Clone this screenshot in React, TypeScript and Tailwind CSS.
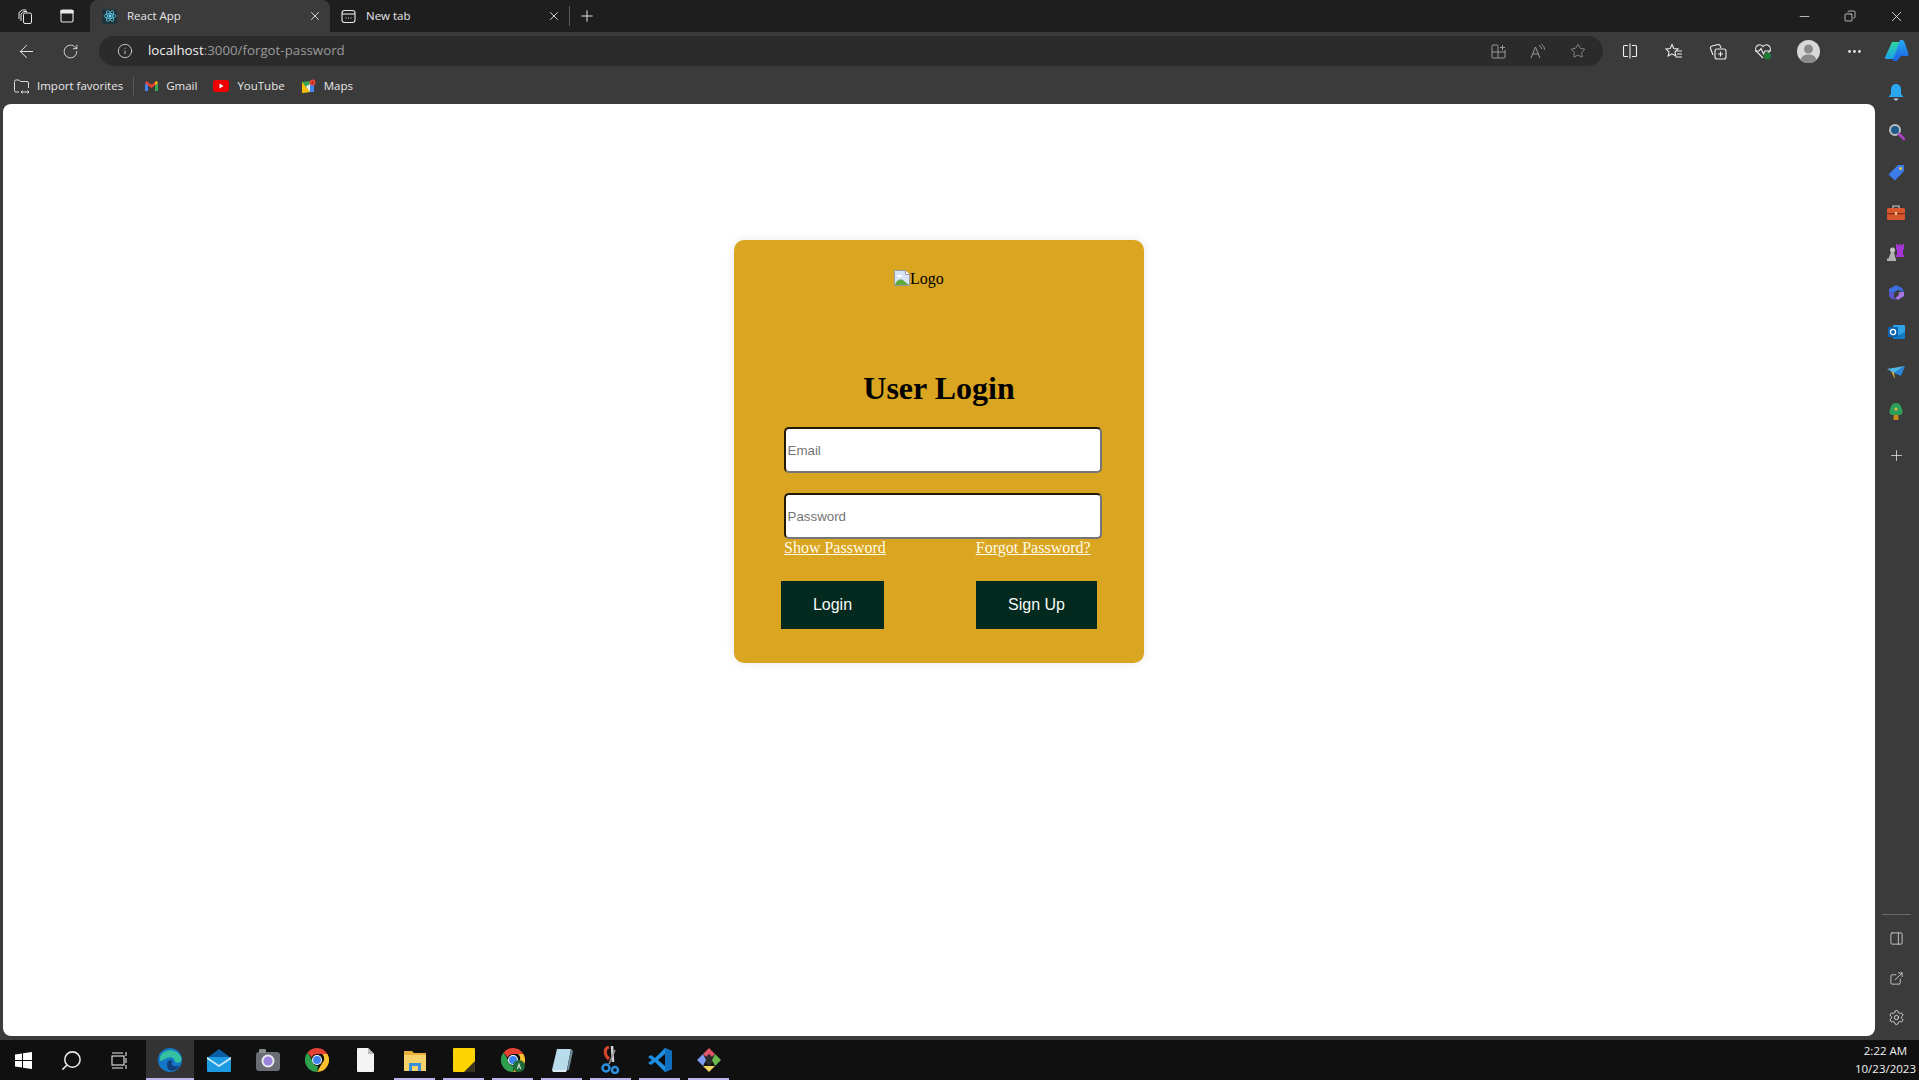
import type { ReactNode } from "react";
import {
  ArrowLeft,
  Copy,
  ExternalLink,
  Info,
  Minus,
  MoreHorizontal,
  PanelRight,
  Plus,
  RotateCw,
  Search,
  Settings,
  Star,
  X,
} from "lucide-react";

function Slot({ width, children }: { width: string; children: ReactNode }) {
  return <div className={`flex shrink-0 items-center justify-center ${width}`}>{children}</div>;
}

function WorkspaceIcon() {
  return (
    <svg width="17" height="17" viewBox="0 0 17 17" fill="none" stroke="#e8e8e8" strokeWidth="1">
      <path d="M2 11V4.5L5.5 2h4" />
      <path d="M4 13V6l3-2.5h3" />
      <rect x="6.5" y="5" width="8" height="10.5" rx="1.5" />
    </svg>
  );
}

function TabsIcon() {
  return (
    <svg width="16" height="16" viewBox="0 0 16 16" fill="none" stroke="#e8e8e8" strokeWidth="1.1">
      <rect x="2" y="2" width="12" height="12" rx="1.5" />
      <path d="M2 2.5h12V5H2z" fill="#e8e8e8" />
    </svg>
  );
}

function ReactFavicon() {
  return (
    <div className="flex h-[15px] w-[15px] items-center justify-center rounded-[2px] bg-[#20333a]">
      <svg width="14" height="14" viewBox="0 0 14 14" fill="none" stroke="#61dafb" strokeWidth="0.7">
        <ellipse cx="7" cy="7" rx="6" ry="2.4" />
        <ellipse cx="7" cy="7" rx="6" ry="2.4" transform="rotate(60 7 7)" />
        <ellipse cx="7" cy="7" rx="6" ry="2.4" transform="rotate(120 7 7)" />
        <circle cx="7" cy="7" r="1.2" fill="#61dafb" />
      </svg>
    </div>
  );
}

function NewTabIcon() {
  return (
    <svg width="15" height="15" viewBox="0 0 15 15" fill="none" stroke="#e8e8e8" strokeWidth="1.1">
      <rect x="1" y="1.5" width="13" height="12" rx="2.5" />
      <path d="M1 5h13" />
      <path d="M4.5 9h1M7 9h1M9.5 9h1" />
    </svg>
  );
}

function ImportIcon() {
  return (
    <svg width="17" height="17" viewBox="0 0 17 17" fill="none" stroke="#dcdcdc" strokeWidth="1">
      <path d="M6 14H3a1.5 1.5 0 0 1-1.5-1.5v-9A1.5 1.5 0 0 1 3 2h3l1.5 1.5H14A1.5 1.5 0 0 1 15.5 5v5" />
      <path d="M8 14h8M9.5 12.5 8 14l1.5 1.5M14.5 12.5 16 14l-1.5 1.5" />
    </svg>
  );
}

function GmailIcon() {
  return (
    <svg width="15" height="12" viewBox="0 0 15 12">
      <path d="M1 3v8h3V5z" fill="#4285f4" />
      <path d="M14 3v8h-3V5z" fill="#34a853" />
      <path d="M1 3 7.5 8 14 3 12.5 1 7.5 4.8 2.5 1z" fill="#ea4335" />
      <path d="M11 5l3-2-1.5-2-1.5 1z" fill="#fbbc04" />
    </svg>
  );
}

function YoutubeIcon() {
  return (
    <svg width="16" height="12" viewBox="0 0 16 12">
      <rect width="16" height="12" rx="3" fill="#f00000" />
      <path d="M6.5 3.5 10.5 6l-4 2.5z" fill="#fff" />
    </svg>
  );
}

function MapsIcon() {
  return (
    <svg width="15" height="15" viewBox="0 0 15 15">
      <path d="M1 3 9 2v11l-8 1z" fill="#34a853" />
      <path d="M1 3l8 10-8 1z" fill="#fbbc04" />
      <path d="M5 7.5 9 5v8z" fill="#e8eaed" />
      <path d="M9 5h4v8H9z" fill="#4285f4" />
      <circle cx="11.5" cy="3.5" r="3" fill="#ea4335" />
      <circle cx="11.5" cy="3.5" r="1" fill="#8d2a20" />
    </svg>
  );
}

function AppsAddIcon() {
  return (
    <svg width="15" height="15" viewBox="0 0 15 15" fill="none" stroke="#9a9a9a" strokeWidth="1">
      <path d="M1 2a1 1 0 0 1 1-1h4a1 1 0 0 1 1 1v12H2a1 1 0 0 1-1-1z" />
      <path d="M1 8h13v5a1 1 0 0 1-1 1H7" />
      <path d="M14 8V6M11.5 1v5M9 3.5h5" />
    </svg>
  );
}

function ReadAloudIcon() {
  return (
    <svg width="16" height="15" viewBox="0 0 16 15" fill="none" stroke="#9a9a9a" strokeWidth="1">
      <path d="M1 14 5.5 3 10 14M2.800 10h5.400" />
      <path d="M9 1.500c1.500.5 2.500 1.800 2.700 3.500M11.500 0.500c1.800 1 3 2.800 3 5" />
    </svg>
  );
}

function SplitIcon() {
  return (
    <svg width="16" height="16" viewBox="0 0 16 16" fill="none" stroke="#ededed" strokeWidth="1.100">
      <path d="M6 2.500H2.500a1 1 0 0 0-1 1v9a1 1 0 0 0 1 1H6" />
      <path d="M10 2.500h3.500a1 1 0 0 1 1 1v9a1 1 0 0 1-1 1H10" />
      <path d="M8 0.500v15" />
    </svg>
  );
}

function FavoritesIcon() {
  return (
    <svg width="18" height="17" viewBox="0 0 18 17" fill="none" stroke="#ededed" strokeWidth="1.100">
      <path d="M7 1.500 8.800 5.500l4.200.5-3 2.900.8 4.100L7 10.800l-3.800 2.200L4 8.900 1 6l4.200-.5z" />
      <path d="M11.500 8h5.500M12 11h5M10.500 14H17" />
    </svg>
  );
}

function CollectionsIcon() {
  return (
    <svg width="18" height="18" viewBox="0 0 18 18" fill="none" stroke="#ededed" strokeWidth="1.1">
      <path d="M4 13 1.500 6.500A2 2 0 0 1 3 4l6-1.500a2 2 0 0 1 2 1L12 6" />
      <rect x="6" y="7" width="11" height="10" rx="2" />
      <path d="M11.500 9.500v5M9 12h5" />
    </svg>
  );
}

function HealthIcon() {
  return (
    <svg width="18" height="18" viewBox="0 0 18 18" fill="none">
      <path d="M9 16 2.500 9.500A4 4 0 0 1 9 4.500a4 4 0 0 1 6.500 5L13 12" stroke="#ededed" strokeWidth="1.1" />
      <path d="M1 9h4l2-2.500L9.500 12l1.500-3h6" stroke="#ededed" strokeWidth="1.1" />
      <circle cx="13.500" cy="14" r="3.500" fill="#1f7a34" />
    </svg>
  );
}

function Avatar() {
  return (
    <svg width="23" height="23" viewBox="0 0 23 23">
      <circle cx="11.500" cy="11.500" r="11.500" fill="#d8d8d8" />
      <circle cx="11.500" cy="9" r="4.500" fill="#8a8a8a" />
      <path d="M3.500 20c1-4 4-5.500 8-5.500s7 1.500 8 5.500a11.500 11.500 0 0 1-16 0z" fill="#8a8a8a" />
    </svg>
  );
}

function CopilotIcon() {
  return (
    <svg width="25" height="24" viewBox="0 0 25 24">
      <defs>
        <linearGradient id="copilotLeft" x1="0" y1="0" x2="0" y2="1">
          <stop offset="0" stopColor="#2fd6a0" />
          <stop offset="1" stopColor="#1aa0e8" />
        </linearGradient>
        <linearGradient id="copilotRight" x1="0" y1="0" x2="0" y2="1">
          <stop offset="0" stopColor="#27a9f5" />
          <stop offset="1" stopColor="#1b5fe0" />
        </linearGradient>
      </defs>
      <path d="M8 3h8l-5 15a3 3 0 0 1-3 2H2a1 1 0 0 1-1-1.500z" fill="url(#copilotLeft)" />
      <path d="M16 1h1.500a3 3 0 0 1 3 2L24.500 15a1.500 1.500 0 0 1-1.500 2h-6L13 22H8.500z" fill="url(#copilotRight)" />
    </svg>
  );
}

function SideIcon({ name }: { name: string }) {
  if (name === "bell")
    return (
      <svg width="16" height="18" viewBox="0 0 16 18">
        <path d="M8 1a5 5 0 0 1 5 5v5l2.500 3H.5L3 11V6a5 5 0 0 1 5-5z" fill="#2aa7ee" />
        <path d="M6 15.500h4a2 2 0 0 1-4 0z" fill="#c8d8e8" />
      </svg>
    );
  if (name === "search")
    return (
      <svg width="17" height="18" viewBox="0 0 17 18" fill="none">
        <circle cx="7" cy="7" r="5" fill="#1d5c8a" stroke="#b8bec4" strokeWidth="2" />
        <path d="M11 11l5 5" stroke="#b23ec9" strokeWidth="2.600" strokeLinecap="round" />
      </svg>
    );
  if (name === "tag")
    return (
      <svg width="17" height="17" viewBox="0 0 17 17">
        <path d="M10 1h6v6l-9 9.500L.5 10.500z" fill="#3d7bea" />
        <circle cx="12.500" cy="4.500" r="1.500" fill="#e8c64a" />
      </svg>
    );
  if (name === "tools")
    return (
      <svg width="18" height="15" viewBox="0 0 18 15">
        <path d="M6 3V1h6v2" fill="none" stroke="#c9c9c9" strokeWidth="1.2" />
        <rect y="3" width="18" height="12" rx="1.500" fill="#d8572c" />
        <rect y="8" width="18" height="1.500" fill="#8f3418" />
        <rect x="8" y="7" width="2" height="3" fill="#f2c4a8" />
      </svg>
    );
  if (name === "chess")
    return (
      <svg width="18" height="18" viewBox="0 0 18 18">
        <path d="M9 1h1.500v1.500H12V1h1.500v1.500H15V1h2v5l-1 1v5h1v2H9v-2h1V7L9 6z" fill="#a334d6" />
        <circle cx="5.500" cy="7" r="2.500" fill="#c4c4c4" />
        <path d="M4 9h3l1.500 6.500H9V18H0v-2.500h1.500z" fill="#b0b0b0" />
      </svg>
    );
  if (name === "m365")
    return (
      <svg width="17" height="17" viewBox="0 0 17 17">
        <path d="M8 1l6 3 2 4-6-2-4 3-5-1V5z" fill="#3b6fe0" />
        <path d="M16 8v4l-6 4-3-2 3-2 1-4z" fill="#a774e0" />
        <path d="M1 8l5 1v5l2 2-4-1-3-3z" fill="#5a55cf" />
        <path d="M6 9l4-3 1 3-1 3-4 1z" fill="#3d3d3d" />
      </svg>
    );
  if (name === "outlook")
    return (
      <svg width="17" height="16" viewBox="0 0 17 16">
        <rect x="5" y="1" width="12" height="14" rx="1" fill="#2fa3e6" />
        <path d="M5 8l6 3 6-3v7H5z" fill="#1378c4" />
        <rect y="3" width="10" height="10" rx="1" fill="#0a62ae" />
        <circle cx="5" cy="8" r="2.600" fill="none" stroke="#fff" strokeWidth="1.3" />
      </svg>
    );
  if (name === "send")
    return (
      <svg width="18" height="13" viewBox="0 0 18 13">
        <path d="M0 3 18 0 7 7z" fill="#4fb6e8" />
        <path d="M18 0 7 7l7 3z" fill="#2a86d8" />
        <path d="M4 5l3 2 1 6z" fill="#e8b93a" />
      </svg>
    );
  return (
    <svg width="14" height="18" viewBox="0 0 14 18">
      <path d="M7 0c3 0 5 2 5.500 5C14 7 14 10 12 12H2C0 10 0 7 1.500 5 2 2 4 0 7 0z" fill="#2e9e5b" />
      <rect x="4.500" y="12" width="5" height="5" rx="1" fill="#c9871e" />
      <circle cx="7" cy="6" r="1.500" fill="#e2b93d" />
    </svg>
  );
}

function TaskbarIcon({ name }: { name: string }) {
  if (name === "edge")
    return (
      <svg width="24" height="24" viewBox="0 0 24 24">
        <circle cx="12" cy="12" r="12" fill="#1478c8" />
        <path d="M2 9C5 1 18-1 23 9c2 5-3 7-6 5 0-4-4-6-8-4-3 1-5 3-7 3z" fill="#35c0a0" />
        <path d="M9 16c0-3 3-5 6-3-2 1-2 4 1 5 3 1 5 0 6-1-2 4-7 7-11 5-1-1-2-3-2-6z" fill="#123e7a" />
      </svg>
    );
  if (name === "mail")
    return (
      <svg width="24" height="24" viewBox="0 0 24 24">
        <path d="M12 1 24 10H0z" fill="#0a5ea8" />
        <rect y="9" width="24" height="15" rx="1" fill="#1e9be0" />
        <path d="M0 9l12 8 12-8v2l-12 8L0 11z" fill="#d4edfb" />
      </svg>
    );
  if (name === "camera")
    return (
      <svg width="24" height="22" viewBox="0 0 24 22">
        <rect y="3" width="24" height="19" rx="3" fill="#6b6e75" />
        <rect x="3" y="0" width="7" height="4" rx="1" fill="#8a8d94" />
        <circle cx="12" cy="12" r="6.500" fill="#e8e8ef" />
        <circle cx="12" cy="12" r="4.500" fill="#9a83dc" />
      </svg>
    );
  if (name === "chrome" || name === "chromeA")
    return (
      <svg width="24" height="24" viewBox="0 0 24 24">
        <path d="M12 0a12 12 0 0 1 10.400 6H12a6 6 0 0 0-5.500 3.500L2.600 4.500A12 12 0 0 1 12 0z" fill="#e64234" />
        <path d="M22.400 6A12 12 0 0 1 12 24l5.200-9a6 6 0 0 0 0-9z" fill="#fbc02d" />
        <path d="M12 24A12 12 0 0 1 2.600 4.500L7 12a6 6 0 0 0 6 6z" fill="#2e9f4d" />
        <circle cx="12" cy="12" r="5" fill="#fff" />
        <circle cx="12" cy="12" r="4" fill="#3f83ee" />
        {name === "chromeA" && <circle cx="18" cy="18" r="6" fill="#1f6b3a" />}
        {name === "chromeA" && <path d="M18 14.500 15.800 21h1.200l1-3 1 3h1.200z" fill="#d8ecd8" />}
      </svg>
    );
  if (name === "file")
    return (
      <svg width="17" height="24" viewBox="0 0 17 24">
        <path d="M1 0h10l6 6v17a1 1 0 0 1-1 1H1a1 1 0 0 1-1-1V1a1 1 0 0 1 1-1z" fill="#f4f4f4" />
        <path d="M11 0l6 6h-6z" fill="#bdbdbd" />
      </svg>
    );
  if (name === "explorer")
    return (
      <svg width="22" height="22" viewBox="0 0 22 22">
        <path d="M0 2h8l2 2h12v18H0z" fill="#e8b23a" />
        <rect y="6" width="22" height="16" fill="#f7d26a" />
        <rect x="5" y="14" width="12" height="8" fill="#3a8fd8" />
        <rect x="8" y="17" width="6" height="5" fill="#f7d26a" />
      </svg>
    );
  if (name === "sticky")
    return (
      <svg width="22" height="24" viewBox="0 0 22 24">
        <path d="M1 0h20a1 1 0 0 1 1 1v22a1 1 0 0 1-1 1H1a1 1 0 0 1-1-1V1a1 1 0 0 1 1-1z" fill="#fbd400" />
        <path d="M22 13v10a1 1 0 0 1-1 1H11z" fill="#3a3320" />
      </svg>
    );
  if (name === "notepad")
    return (
      <svg width="22" height="24" viewBox="0 0 22 24">
        <path d="M6 1h14L16 22H1z" fill="#b8dcec" />
        <path d="M16 22l4-21 2 2-4 19z" fill="#6e8a96" />
        <path d="M1 22h15l-1 2H2z" fill="#dfeef5" />
      </svg>
    );
  if (name === "snip")
    return (
      <svg width="20" height="28" viewBox="0 0 20 28" fill="none">
        <path d="M8 1C3 2 3 9 8 13" stroke="#d8452e" strokeWidth="3" />
        <path d="M11 0l1 16" stroke="#d6d6d6" strokeWidth="2.5" />
        <path d="M14 4l-6 14" stroke="#9a9a9a" strokeWidth="1.5" />
        <circle cx="5" cy="22" r="3.500" stroke="#2b8fe0" strokeWidth="2.5" />
        <circle cx="14" cy="24" r="3" stroke="#2b8fe0" strokeWidth="2.5" />
      </svg>
    );
  if (name === "vscode")
    return (
      <svg width="24" height="24" viewBox="0 0 24 24">
        <path d="M17 0l7 3v18l-7 3L7 14l-4 3-3-2 4-3-4-3 3-2 4 3z" fill="#1c8fe0" />
        <path d="M17 6v12l-7-6z" fill="#0c0c0c" />
        <path d="M17 0l7 3v18l-7 3z" fill="#0f6fbd" />
      </svg>
    );
  return (
    <svg width="24" height="24" viewBox="0 0 24 24">
      <path d="M12 6l6 6-6 6-6-6z" fill="#2a2a2a" />
      <path d="M6 6l6-6 0 6-3 3z" fill="#e0546a" />
      <path d="M12 0l6 6-3 3-3-3z" fill="#e0546a" />
      <path d="M0 12l6-6 3 6-3 6z" fill="#7f9bf0" />
      <path d="M18 6l6 6-6 6-3-6z" fill="#69b84c" />
      <path d="M6 18h12l-6 6z" fill="#f0d264" />
    </svg>
  );
}

function BrokenImage() {
  return (
    <svg width="16" height="16" viewBox="0 0 16 16" className="inline-block align-[-2px]">
      <path d="M.5.5h11l4 4v11H.5z" fill="#d7e4f7" stroke="#9a9a9a" />
      <path d="M11.500.5v4h4" fill="#fff" stroke="#9a9a9a" />
      <path d="M1 15c1-5 6-7 9-4l5 4z" fill="#5fa83d" />
      <path d="M3 5h5v2H3z" fill="#fff" />
    </svg>
  );
}

const taskbarApps = [
  { name: "mail", running: false },
  { name: "camera", running: false },
  { name: "chrome", running: false },
  { name: "file", running: false },
  { name: "explorer", running: true },
  { name: "sticky", running: true },
  { name: "chromeA", running: true },
  { name: "notepad", running: true },
  { name: "snip", running: true },
  { name: "vscode", running: true },
  { name: "git", running: true },
];

const sideIcons = ["bell", "search", "tag", "tools", "chess", "m365", "outlook", "send", "tree"];

export default function App() {
  return (
    <div className="flex h-screen w-full flex-col overflow-hidden bg-[#3b3b3b] font-['Open_Sans',sans-serif] text-[11.5px] text-[#e8e8e8]">
      {/* Tab strip */}
      <div className="flex h-8 shrink-0 items-center bg-[#1e1e1e]">
        <Slot width="w-[50px]">
          <WorkspaceIcon />
        </Slot>
        <Slot width="w-[34px]">
          <TabsIcon />
        </Slot>
        <div className="ml-[6px] flex h-8 w-[240px] items-center rounded-t-lg bg-[#3b3b3b] pl-[12px]">
          <ReactFavicon />
          <span className="ml-[10px] flex-1">React App</span>
          <X size={14} strokeWidth={1.5} className="mr-[8px]" />
        </div>
        <div className="flex h-8 w-[240px] items-center pl-[11px]">
          <NewTabIcon />
          <span className="ml-[10px] flex-1">New tab</span>
          <X size={14} strokeWidth={1.5} className="mr-[8px]" />
          <div className="h-5 w-px bg-[#5a5a5a]" />
        </div>
        <Plus size={18} strokeWidth={1.3} className="ml-[8px]" />
        <div className="flex-1" />
        <Slot width="w-[46px]">
          <Minus size={15} strokeWidth={1.2} />
        </Slot>
        <Slot width="w-[46px]">
          <Copy size={12} strokeWidth={1.5} className="-scale-x-100" />
        </Slot>
        <Slot width="w-[46px]">
          <X size={17} strokeWidth={1.2} />
        </Slot>
      </div>

      {/* Address row */}
      <div className="flex h-[38px] shrink-0 items-center">
        <Slot width="w-[53px]">
          <ArrowLeft size={21} strokeWidth={1.1} />
        </Slot>
        <Slot width="w-[35px]">
          <RotateCw size={17} strokeWidth={1.2} />
        </Slot>
        <div className="ml-[11px] flex h-[30px] w-[1504px] items-center rounded-full bg-[#2b2b2b] pl-[18px]">
          <Info size={16} strokeWidth={1.2} />
          <span className="ml-[15px] text-[13.3px] text-[#9a9a9a]">
            <span className="text-[#f0f0f0]">localhost</span>:3000/forgot-password
          </span>
          <div className="flex-1" />
          <Slot width="w-[40px]">
            <AppsAddIcon />
          </Slot>
          <Slot width="w-[40px]">
            <ReadAloudIcon />
          </Slot>
          <Slot width="w-[40px]">
            <Star size={16} strokeWidth={1.2} className="text-[#9a9a9a]" />
          </Slot>
          <div className="w-[5px]" />
        </div>
        <div className="ml-[5px] flex items-center">
          <Slot width="w-[44px]">
            <SplitIcon />
          </Slot>
          <Slot width="w-[44px]">
            <FavoritesIcon />
          </Slot>
          <Slot width="w-[44px]">
            <CollectionsIcon />
          </Slot>
          <Slot width="w-[45px]">
            <HealthIcon />
          </Slot>
          <Slot width="w-[46px]">
            <Avatar />
          </Slot>
          <Slot width="w-[46px]">
            <MoreHorizontal size={17} />
          </Slot>
          <Slot width="w-[39px]">
            <CopilotIcon />
          </Slot>
        </div>
      </div>

      {/* Favorites bar */}
      <div className="flex h-[34px] shrink-0 items-center pb-[2px] pl-[13px]">
        <ImportIcon />
        <span className="ml-[7px]">Import favorites</span>
        <div className="ml-[10px] h-[18px] w-px bg-[#5a5a5a]" />
        <div className="ml-[10px] flex items-center">
          <GmailIcon />
          <span className="ml-[7px]">Gmail</span>
        </div>
        <div className="ml-[16px] flex items-center">
          <YoutubeIcon />
          <span className="ml-[8px]">YouTube</span>
        </div>
        <div className="ml-[16px] flex items-center">
          <MapsIcon />
          <span className="ml-[8px]">Maps</span>
        </div>
      </div>

      {/* Page + side pane */}
      <div className="flex h-[932px] shrink-0">
        <main className="ml-[3px] flex w-[1872px] shrink-0 flex-col items-center rounded-lg bg-white font-['Liberation_Serif',serif] text-[16px] text-black">
          <form className="mt-[136px] flex h-[423px] w-[410px] flex-col rounded-[10px] bg-[#daa520] pt-[28px] shadow-[0_0_10px_rgba(0,0,0,0.1)]">
            <div className="h-[90px] pt-[2px] pl-[160px] leading-[18px]">
              <BrokenImage />
              Logo
            </div>
            <h2 className="mt-[12px] text-center text-[32px] leading-[37px] font-bold">User Login</h2>
            <input
              placeholder="Email"
              className="mt-[20px] ml-[50px] h-[46px] w-[318px] rounded-[5px] border-2 border-t-[#241a08] border-r-[#767676] border-b-[#767676] border-l-[#241a08] bg-white px-[1.5px] font-['Liberation_Sans',sans-serif] text-[13.33px] placeholder:text-[#757575]"
            />
            <input
              placeholder="Password"
              className="mt-[20px] ml-[50px] h-[46px] w-[318px] rounded-[5px] border-2 border-t-[#241a08] border-r-[#767676] border-b-[#767676] border-l-[#241a08] bg-white px-[1.5px] font-['Liberation_Sans',sans-serif] text-[13.33px] placeholder:text-[#757575]"
            />
            <div className="flex h-[18px] pl-[50px] leading-[18px] text-[#fffbe6] underline">
              <a href="#show">Show Password</a>
              <a href="#forgot" className="ml-[90px]">
                Forgot Password?
              </a>
            </div>
            <div className="mt-[24px] flex pl-[47px] font-['Liberation_Sans',sans-serif] text-[#f4fbf8]">
              <button type="button" className="h-[48px] w-[103px] bg-[#04291e]">
                Login
              </button>
              <button type="button" className="ml-[92px] h-[48px] w-[121px] bg-[#04291e]">
                Sign Up
              </button>
            </div>
          </form>
        </main>
        <aside className="flex flex-1 flex-col items-center pr-[2px]">
          <div className="flex w-full flex-col items-center">
            {sideIcons.map((name) => (
              <div key={name} className="flex h-[40px] w-full items-center justify-center first:-mt-[32px]">
                <SideIcon name={name} />
              </div>
            ))}
            <div className="flex h-[46px] w-full items-center justify-center">
              <Plus size={17} strokeWidth={1.1} />
            </div>
          </div>
          <div className="flex-1" />
          <div className="h-px w-[29px] bg-[#6a6a6a]" />
          <div className="mt-[3px] flex h-[40px] w-full items-center justify-center">
            <PanelRight size={15} strokeWidth={1.2} />
          </div>
          <div className="flex h-[40px] w-full items-center justify-center">
            <ExternalLink size={15} strokeWidth={1.2} />
          </div>
          <div className="flex h-[38px] w-full items-center justify-center">
            <Settings size={17} strokeWidth={1.2} />
          </div>
        </aside>
      </div>

      {/* Taskbar */}
      <div className="mt-[4px] flex h-[40px] shrink-0 items-center bg-[#101010]">
        <Slot width="w-[47px]">
          <svg width="17" height="17" viewBox="0 0 17 17" fill="#fff">
            <path d="M0 2.400 7 1.400V8H0zM8 1.300 17 0v8H8zM0 9h7v6.600L0 14.600zM8 9h9v8l-9-1.300z" />
          </svg>
        </Slot>
        <Slot width="w-[48px]">
          <Search size={23} strokeWidth={1.6} className="-scale-x-100" />
        </Slot>
        <Slot width="w-[48px]">
          <svg width="17" height="19" viewBox="0 0 17 19" fill="none" stroke="#e8e8e8" strokeWidth="1.1">
            <rect x="1" y="5" width="12" height="9" />
            <path d="M1 2h11M1 17h11M15 1v4M15 7v5M15 14v4" />
          </svg>
        </Slot>
        <div className="relative ml-[3px] flex h-[40px] w-[48px] shrink-0 items-center justify-center bg-[#333333]">
          <TaskbarIcon name="edge" />
          <div className="absolute right-0 bottom-0 left-0 h-[2px] bg-[#b9b5ee]" />
        </div>
        {taskbarApps.map((app) => (
          <div key={app.name} className="relative flex h-[40px] w-[49px] shrink-0 items-center justify-center">
            <TaskbarIcon name={app.name} />
            {app.running && <div className="absolute right-[4px] bottom-0 left-[4px] h-[2px] bg-[#b9b5ee]" />}
          </div>
        ))}
        <div className="flex-1" />
        <div className="mr-[3px] text-center leading-[18px] text-[#f0f0f0]">
          <div>2:22 AM</div>
          <div>10/23/2023</div>
        </div>
      </div>
    </div>
  );
}
